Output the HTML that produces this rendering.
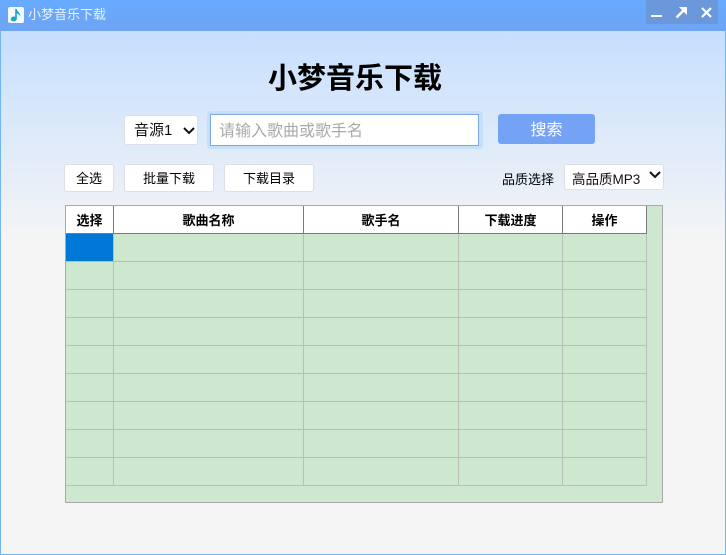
<!DOCTYPE html>
<html lang="zh">
<head>
<meta charset="utf-8">
<title>小梦音乐下载</title>
<style>
*{box-sizing:border-box;margin:0;padding:0}
html,body{width:726px;height:555px;overflow:hidden;background:#f5f5f5}
body{position:relative;font-family:"Liberation Sans","Noto Sans CJK SC",sans-serif;color:#000}
.a{position:absolute}
.t{position:absolute;white-space:nowrap;text-align:center;line-height:1}
#bar{left:0;top:0;width:726px;height:31px;background:linear-gradient(#66abff,#6fa3f3)}
#bg{left:0;top:31px;width:726px;height:524px;background:linear-gradient(#c6dffe 0,#f5f5f5 212px);border:solid #72b5f6;border-width:0 1px 1px 1px}
#ctl{left:646px;top:0;width:72px;height:24px;background:#6a98da}
.btn{position:absolute;background:#fff;border:1px solid #dcdfe6;border-radius:3px;font-size:13px;text-align:center;line-height:27px;height:28px}
.sel{position:absolute;background:#fff;border:1px solid #dcdfe6;border-radius:3px}
#tbl{left:65px;top:205px;width:598px;height:298px;background:#cee7cf;border:1px solid #a9a9a9}
.h{position:absolute;top:206px;height:28px;background:#fff;border-right:1px solid #7a7a7a;border-bottom:1px solid #7a7a7a;font-size:13px;font-weight:bold;text-align:center;line-height:30px}
.vl{position:absolute;top:234px;width:1px;height:252px;background:#bcbcbc}
.hl{position:absolute;left:66px;width:581px;height:1px;background:#bcbcbc}
</style>
</head>
<body>
<div id="bg" class="a"></div>
<div id="bar" class="a"></div>
<div id="ctl" class="a"></div>

<svg class="a" style="left:8px;top:7px" width="16" height="16" viewBox="0 0 16 16">
<rect width="16" height="16" rx="2" fill="#f4fbff"/>
<path d="M7.200 2H8.800C9 5 12.500 5.500 12.500 9.500C11.500 7.500 10 7 8.800 6.500V12H7.200Z" fill="#1aa3cf"/>
<ellipse cx="5.800" cy="12" rx="3" ry="2.500" fill="#1aa8d0"/>
</svg>
<div class="t" style="left:28px;top:8px;font-size:13px;color:#e8f2ff">小梦音乐下载</div>

<svg class="a" style="left:646px;top:0" width="72" height="24" viewBox="0 0 72 24">
<path d="M5 16H16" stroke="#fff" stroke-width="2" fill="none"/>
<path d="M30.500 17.500L38 10" stroke="#fff" stroke-width="2.400" fill="none"/>
<path d="M33 7H41V15Z" fill="#fff"/>
<path d="M56 8L65 17M65 8L56 17" stroke="#fff" stroke-width="2.200" fill="none"/>
</svg>

<div class="t" style="left:0;top:65px;width:710px;font-size:29px;font-weight:bold">小梦音乐下载</div>

<div class="sel" style="left:124px;top:115px;width:74px;height:30px"></div>
<div class="t" style="left:134px;top:123px;font-size:15px;color:#111">音源1</div>
<svg class="a" style="left:182px;top:126px" width="14" height="10" viewBox="0 0 14 10"><path d="M2 2L7 7L12 2" stroke="#111" stroke-width="2" fill="none"/></svg>

<div class="a" style="left:207px;top:111px;width:276px;height:38px;background:#bcdcfb;border-radius:4px;opacity:.75"></div>
<div class="a" style="left:210px;top:114px;width:269px;height:32px;background:#fff;border:1px solid #7da7dd"></div>
<div class="t" style="left:219px;top:124px;font-size:16px;color:#a9a9a9">请输入歌曲或歌手名</div>

<div class="a" style="left:498px;top:114px;width:97px;height:30px;background:#74a2f5;border-radius:3px;color:#fff;font-size:16px;text-align:center;line-height:33px">搜索</div>

<div class="btn" style="left:64px;top:164px;width:50px">全选</div>
<div class="btn" style="left:124px;top:164px;width:90px">批量下载</div>
<div class="btn" style="left:224px;top:164px;width:90px">下载目录</div>

<div class="t" style="left:502px;top:173px;font-size:13px">品质选择</div>
<div class="sel" style="left:564px;top:164px;width:100px;height:26px"></div>
<div class="t" style="left:572px;top:173px;font-size:13.500px;color:#111">高品质MP3</div>
<svg class="a" style="left:648px;top:170px" width="14" height="10" viewBox="0 0 14 10"><path d="M2 2L7 7L12 2" stroke="#111" stroke-width="2" fill="none"/></svg>

<div id="tbl" class="a"></div>
<div class="h" style="left:66px;width:48px">选择</div>
<div class="h" style="left:114px;width:190px">歌曲名称</div>
<div class="h" style="left:304px;width:155px">歌手名</div>
<div class="h" style="left:459px;width:104px">下载进度</div>
<div class="h" style="left:563px;width:84px">操作</div>

<div class="a" style="left:66px;top:234px;width:47px;height:27px;background:#0078d7"></div>

<div class="vl" style="left:113px"></div>
<div class="vl" style="left:303px"></div>
<div class="vl" style="left:458px"></div>
<div class="vl" style="left:562px"></div>
<div class="vl" style="left:646px"></div>

<div class="hl" style="top:261px"></div>
<div class="hl" style="top:289px"></div>
<div class="hl" style="top:317px"></div>
<div class="hl" style="top:345px"></div>
<div class="hl" style="top:373px"></div>
<div class="hl" style="top:401px"></div>
<div class="hl" style="top:429px"></div>
<div class="hl" style="top:457px"></div>
<div class="hl" style="top:485px"></div>
</body>
</html>
